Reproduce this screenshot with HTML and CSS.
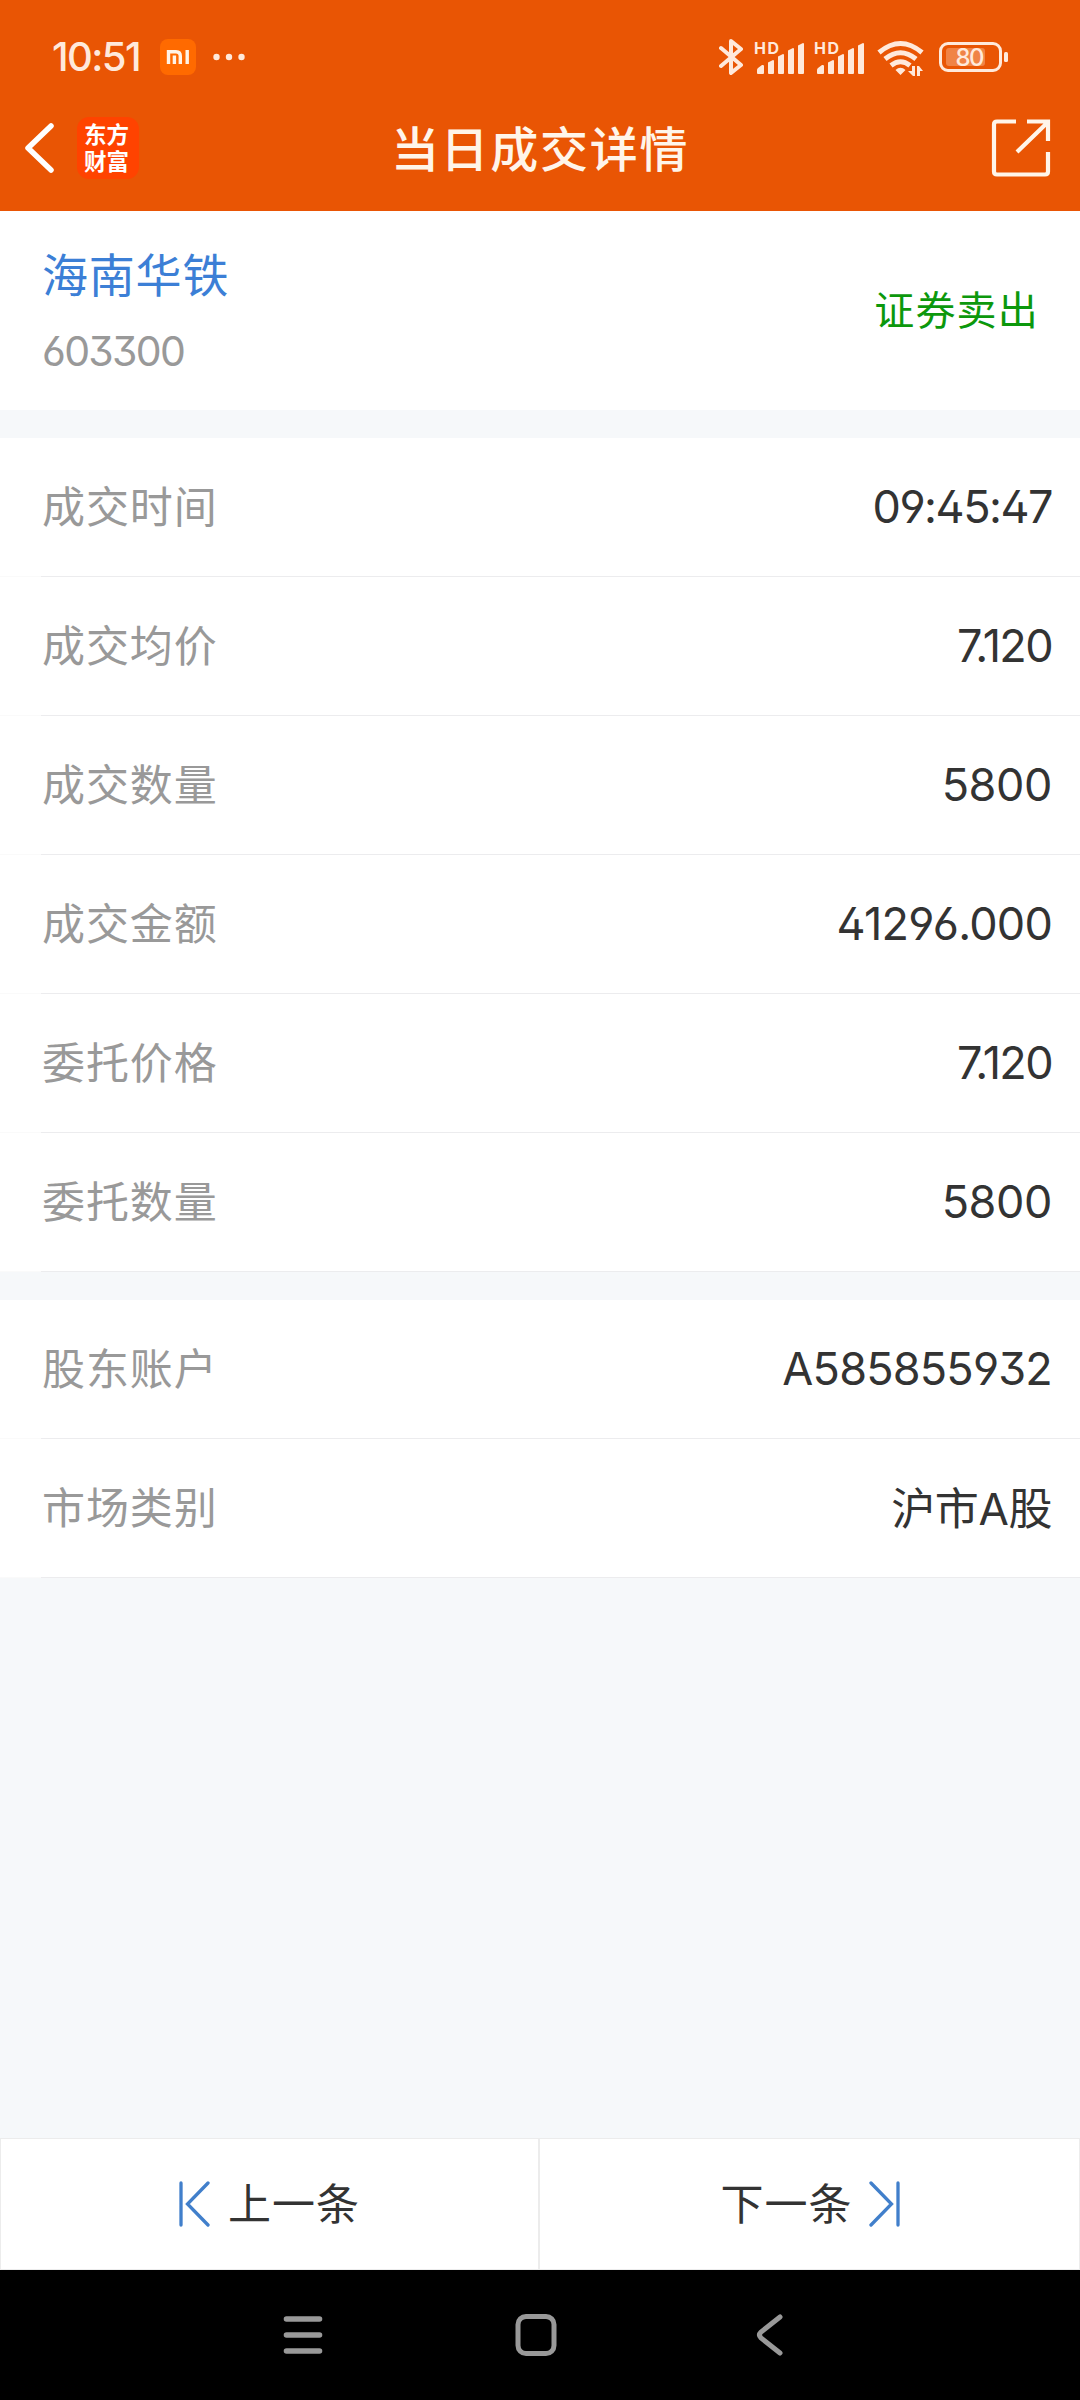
FILE: index.html
```html
<!DOCTYPE html>
<html lang="zh-CN">
<head>
<meta charset="utf-8">
<title>当日成交详情</title>
<link rel="stylesheet" href="styles.css">
</head>
<body>
<div class="screen">
  <header class="top">
    <div class="status">
      <span class="clock">10:51</span>
      <svg class="mi" width="36" height="36" viewBox="0 0 36 36"><rect width="36" height="36" rx="8" fill="#ff6a00"/><path d="M8.500 25V12.700H16Q20.300 12.700 20.300 17V25M14.400 16.500V25M27.200 11V25" fill="none" stroke="#fff3e6" stroke-width="3.400"/></svg>
      <svg class="dots" width="32" height="8" viewBox="0 0 32 8" fill="#ffe9db"><circle cx="3.5" cy="4" r="3.2"/><circle cx="16" cy="4" r="3.2"/><circle cx="28.5" cy="4" r="3.2"/></svg>
      <div class="indicators">
        <svg width="26" height="40" viewBox="0 0 26 40"><path d="M2 11L22 28L12 36V4L22 12L2 29" fill="none" stroke="#ffe9db" stroke-width="4" stroke-linejoin="round" stroke-linecap="round"/></svg>
        <svg class="signal" width="52" height="40" viewBox="0 0 52 40" fill="#ffe9db"><text class="hd" x="0" y="16.5" textLength="25">HD</text><path d="M3 36v-3q0-1 1-2l4-3q2-.5 2 1v7q0 1-1 1H4q-1 0-1-1zM14 36V26q0-1 1-1l4-2q1 0 1 1v12q0 1-1 1h-4q-1 0-1-1zM24 36V20q0-1 1-1l4-2q1 0 1 1v18q0 1-1 1h-4q-1 0-1-1zM34 36V14q0-1 1-1l4-2q1 0 1 1v24q0 1-1 1h-4q-1 0-1-1zM44 36V9q0-1 1-1l4-2q1 0 1 1v29q0 1-1 1h-4q-1 0-1-1z"/></svg>
        <svg class="signal" width="52" height="40" viewBox="0 0 52 40" fill="#ffe9db"><text class="hd" x="0" y="16.5" textLength="25">HD</text><path d="M3 36v-3q0-1 1-2l4-3q2-.5 2 1v7q0 1-1 1H4q-1 0-1-1zM14 36V26q0-1 1-1l4-2q1 0 1 1v12q0 1-1 1h-4q-1 0-1-1zM24 36V20q0-1 1-1l4-2q1 0 1 1v18q0 1-1 1h-4q-1 0-1-1zM34 36V14q0-1 1-1l4-2q1 0 1 1v24q0 1-1 1h-4q-1 0-1-1zM44 36V9q0-1 1-1l4-2q1 0 1 1v29q0 1-1 1h-4q-1 0-1-1z"/></svg>
        <svg class="wifi" width="48" height="40" viewBox="0 0 48 40"><path d="M2 15.500Q23.500-2.500 45 15.500M8 22Q23.500 9.500 39 22M14 28.500Q23.500 21 33 28.500" fill="none" stroke="#ffe9db" stroke-width="5"/><path d="M18.500 33Q23.500 28.500 28.500 33L23.500 38zM35 29h3v10h-2l-5-5h4zM40 39V29h2l4 5h-3v5z" fill="#ffe9db"/></svg>
        <svg class="battery" width="70" height="32" viewBox="0 0 70 32"><rect x="1.500" y="2.500" width="60" height="27" rx="7.500" fill="none" stroke="#ffe9db" stroke-width="3"/><rect x="7" y="7" width="39" height="18" rx="3" fill="#f08346"/><rect x="65" y="11" width="4" height="10" rx="1.500" fill="#ffe9db"/><text class="level" x="16.500" y="24.500" textLength="29">80</text></svg>
      </div>
    </div>
    <nav class="titlebar">
      <svg class="back" width="31" height="52" viewBox="0 0 31 52"><path d="M27 4L4 26L27 48" fill="none" stroke="#fff" stroke-width="5.500" stroke-linecap="round" stroke-linejoin="round"/></svg>
      <div class="brand">东方<br>财富</div>
      <h1 class="title">当日成交详情</h1>
      <svg class="share" width="60" height="60" viewBox="0 0 60 60"><path d="M25 3.500H6Q3 3.500 3 6.500V53.500Q3 56.500 6 56.500H54Q57 56.500 57 53.500V34M36 3.500H57V23M26 34L56 5" fill="none" stroke="#fff5ea" stroke-width="4.200"/></svg>
    </nav>
  </header>

  <section class="summary">
    <div>
      <div class="name">海南华铁</div>
      <div class="code">603300</div>
    </div>
    <div class="side">证券卖出</div>
  </section>

  <section class="group">
    <div class="row"><span class="label">成交时间</span><span class="value time">09:45:47</span></div>
    <div class="row"><span class="label">成交均价</span><span class="value price">7.120</span></div>
    <div class="row"><span class="label">成交数量</span><span class="value">5800</span></div>
    <div class="row"><span class="label">成交金额</span><span class="value amount">41296.000</span></div>
    <div class="row"><span class="label">委托价格</span><span class="value price">7.120</span></div>
    <div class="row"><span class="label">委托数量</span><span class="value">5800</span></div>
  </section>

  <section class="group">
    <div class="row"><span class="label">股东账户</span><span class="value account">A585855932</span></div>
    <div class="row"><span class="label">市场类别</span><span class="value market">沪市A股</span></div>
  </section>

  <div class="pager">
    <div class="page prev"><svg width="32" height="46" viewBox="0 0 32 46"><path d="M2 2V44M29 2L8.500 23L29 44" fill="none" stroke="#417fcb" stroke-width="3.300" stroke-linecap="round"/></svg><span>上一条</span></div>
    <div class="page next"><span>下一条</span><svg width="32" height="46" viewBox="0 0 32 46"><path d="M30 2V44M3 2L23.500 23L3 44" fill="none" stroke="#417fcb" stroke-width="3.300" stroke-linecap="round"/></svg></div>
  </div>

  <footer class="sysnav">
    <svg width="40" height="44" viewBox="0 0 40 44"><path d="M3.500 6H36.500M3.500 22H36.500M3.500 38H36.500" stroke="#999" stroke-width="5.600" stroke-linecap="round"/></svg>
    <svg width="42" height="44" viewBox="0 0 42 44"><rect x="3" y="3.500" width="36" height="37" rx="8" fill="none" stroke="#999" stroke-width="5"/></svg>
    <svg width="28" height="44" viewBox="0 0 28 44"><path d="M24 4L5 19Q2 22 5 25L24 40" fill="none" stroke="#999" stroke-width="5" stroke-linecap="round"/></svg>
  </footer>
</div>
</body>
</html>
```
FILE: styles.css
```css
* { box-sizing: border-box; }
body { margin: 0; font-family: Inter, "Noto Sans CJK SC", sans-serif; }
svg { display: block; flex: none; }

.screen { display: flex; flex-direction: column; width: 1080px; height: 2400px; background: #f6f8fa; }

.top { height: 211px; background: #e95504; }
.status { display: flex; align-items: center; height: 78px; padding: 36px 71px 0 52px; }
.clock { width: 108px; font-size: 40px; line-height: 42px; font-weight: 500; letter-spacing: -1.6px; color: #ffe9db; }
.dots { margin-left: 17px; }
.indicators { display: flex; align-items: center; margin-left: auto; }
.signal { margin-left: 9px; }
.signal + .signal { margin-left: 8px; }
.wifi { margin-left: 11px; }
.battery { margin-left: 14px; }
.hd { font: 700 16px Inter, sans-serif; }
.level { font: 500 24px Inter, sans-serif; fill: #ffe9db; }

.titlebar { display: flex; align-items: center; height: 140px; padding: 0 29px 0 24px; }
.brand { width: 62px; height: 62px; margin-left: 22px; padding: 3px 0 0 7px; border-radius: 12px; background: #ff4300; color: #fff; font: 700 22.5px/27px "Noto Sans CJK SC", sans-serif; }
.title { flex: 1; margin: 0; padding-right: 50px; padding-bottom: 5px; text-align: center; font: 500 48px/60px "Noto Sans CJK SC", sans-serif; letter-spacing: 1.7px; color: #fff5ea; }

.summary { display: flex; align-items: center; justify-content: space-between; height: 199px; padding: 0 41px 0 42px; background: #fff; }
.name { font-size: 46px; line-height: 60px; letter-spacing: 0.8px; color: #3c7fd6; }
.code { margin-top: 21px; font-size: 41px; line-height: 50px; letter-spacing: -1.7px; color: #999; font-feature-settings: "ss01"; }
.side { padding-bottom: 6px; font-size: 40px; letter-spacing: 1.2px; color: #0c980c; }

.group { margin-top: 28px; background: #fff; }
.row { display: flex; align-items: center; justify-content: space-between; height: 139px; padding-right: 28px; padding-left: 42px; background: linear-gradient(#ececee, #ececee) 41px 100% / 100% 1px no-repeat, linear-gradient(#fafafa, #fafafa) 0 100% / 41px 1px no-repeat; }
.label { padding-bottom: 8px; font-size: 43px; letter-spacing: 0.9px; color: #999; }
.value { padding-bottom: 2px; font-size: 45px; letter-spacing: -0.4px; color: #333; font-feature-settings: "ss01"; }
.time { letter-spacing: -1.5px; }
.price { letter-spacing: -1.6px; }
.amount, .account { letter-spacing: -0.8px; }
.market { padding-bottom: 6px; font-size: 44px; letter-spacing: -0.4px; }

.pager { display: flex; height: 132px; margin-top: auto; }
.page { display: flex; flex: 1; align-items: center; border: 1px solid #ececec; background: #fff; font-size: 43px; letter-spacing: 1px; color: #333; }
.page span { padding-bottom: 7px; }
.prev { gap: 17px; padding-left: 178px; }
.next { gap: 15px; padding-left: 181px; }

.sysnav { display: flex; align-items: center; height: 130px; padding-left: 283px; background: #000; }
.sysnav svg + svg { margin-left: 192px; }
.sysnav svg:last-child { margin-left: 199px; }
```
